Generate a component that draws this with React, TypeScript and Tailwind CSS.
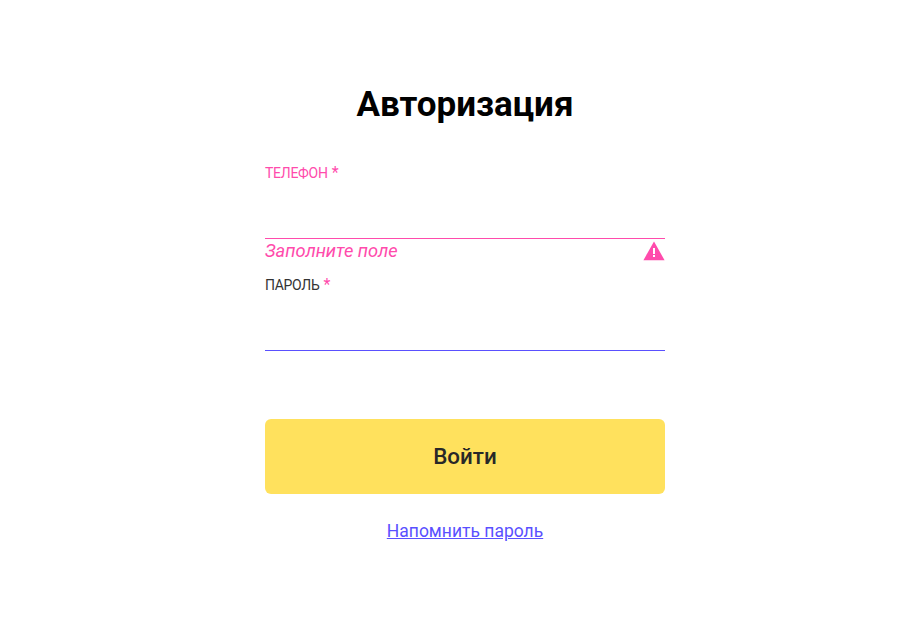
export default function App() {
  return (
    <div className="min-h-[625px] bg-white flex justify-center pl-[25px] font-['Roboto',sans-serif]">
      <div className="w-[400px] flex flex-col pt-[81px]">
        <h1 className="text-[35px] leading-[48px] font-bold text-black text-center">Авторизация</h1>

        {/* Phone */}
        <div className="mt-[36px]">
          <label className="block text-[14px] tracking-[-0.02em] leading-[16px] text-[#ff4bac]">
            ТЕЛЕФОН <span className="ml-px text-[16px] leading-[16px]">*</span>
          </label>
          <input className="block w-full h-[58px] border-b border-[#ff4bac] outline-none" />
          <div className="flex items-start justify-between h-[25px]">
            <span className="text-[18.3px] leading-[24px] italic text-[#ff4bac]">Заполните поле</span>
            <svg width="22" height="20" viewBox="0 0 22 20" className="mt-[2px]">
              <path d="M11 0.5L21.6 19.2H0.4L11 0.5Z" fill="#ff4bac" />
              <rect x="10" y="7" width="2" height="6" fill="#fff" />
              <rect x="10" y="14" width="2" height="2" fill="#fff" />
            </svg>
          </div>
        </div>

        {/* Password */}
        <div className="mt-[13px]">
          <label className="block text-[14px] tracking-[-0.02em] leading-[16px] text-[#333333]">
            ПАРОЛЬ <span className="ml-px text-[16px] leading-[16px] text-[#ff4bac]">*</span>
          </label>
          <input type="password" className="block w-full h-[58px] border-b border-[#5a50ff] outline-none" />
        </div>

        <button className="mt-[68px] h-[75px] rounded-[6px] bg-[#ffe15d] text-[#282828] text-[22.4px] font-medium">
          Войти
        </button>

        <a href="#" className="mt-[25px] text-center text-[17.5px] leading-[24px] text-[#5a50ff] underline">
          Напомнить пароль
        </a>
      </div>
    </div>
  );
}
